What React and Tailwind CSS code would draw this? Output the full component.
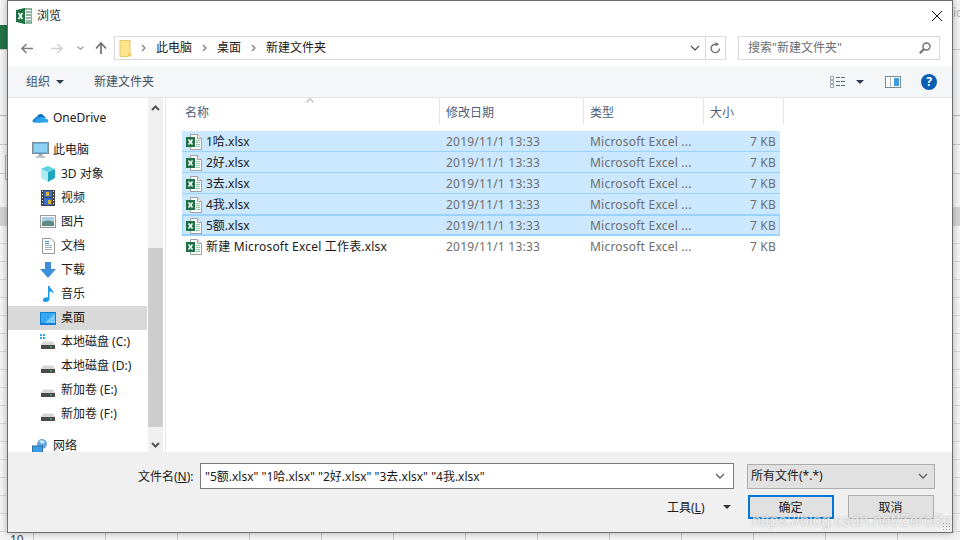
import React from 'react';

const font = "font-['Noto_Sans','Noto_Sans_CJK_SC',sans-serif]";

const XlsIcon = () => (
  <svg width="16" height="16" viewBox="0 0 16 16" className="shrink-0">
    <path d="M4.5 0.5H11.5L15.5 4.5V15.5H4.5Z" fill="#fff" stroke="#a0a0a0" />
    <path d="M11.5 0.5V4.5H15.5" fill="#f0f0f0" stroke="#a0a0a0" />
    <path d="M10 6h4v1h-4zM10 8h4v1h-4zM10 10h4v1h-4zM10 12h4v1h-4z" fill="#8fc6a4" />
    <rect x="0" y="3" width="9" height="10" fill="#1e7145" />
    <path d="M2.5 5.5L6.5 10.5M6.5 5.5L2.5 10.5" stroke="#fff" strokeWidth="1.5" />
  </svg>
);

const Drive = ({ win }) => (
  <svg width="16" height="16" viewBox="0 0 16 16" className="shrink-0">
    {win && <path d="M0 0h2v2H0zM3 0h2v2H3zM0 3h2v2H0zM3 3h2v2H3z" fill="#2ba6e8" />}
    <path d="M3 7.5h10L15 11H1Z" fill="#d6d6d6" />
    <rect x="1" y="11" width="14" height="4" fill="#4a4a4a" />
    <rect x="10" y="12.5" width="2" height="1.2" fill="#35d46a" />
  </svg>
);

const icons = {
  onedrive: (
    <svg width="17" height="16" viewBox="0 0 17 16" className="shrink-0">
      <path d="M5 6.5C6 3.5 10 3 11.5 5.5L14 8H6Z" fill="#0f6fc4" />
      <path d="M2 12.5C0 12.5 0 9 2.5 8.8C3.5 6 6.5 6 7.5 7.5L11 12.5Z" fill="#1b8ad8" />
      <path d="M4 12.5C3 10 5 8.5 7 8.3C8.5 6.5 12 6.5 13 8.8C15.5 8.5 17 10 16 12.5Z" fill="#2aa5ee" />
    </svg>
  ),
  pc: (
    <svg width="17" height="16" viewBox="0 0 17 16" className="shrink-0">
      <rect x="0.5" y="0.5" width="16" height="11" fill="#63b5e6" stroke="#7d8b96" />
      <rect x="2" y="2" width="13" height="8" fill="#8fd1f5" />
      <path d="M6.5 12h4v2h-4z" fill="#a4aab0" />
      <path d="M4 14.5h9v1H4z" fill="#7d8b96" />
    </svg>
  ),
  cube: (
    <svg width="16" height="16" viewBox="0 0 16 16" className="shrink-0">
      <path d="M8 0L1 3V12L8 16Z" fill="#a9ecf2" />
      <path d="M8 6V16L15 12V3Z" fill="#1fa6bf" />
      <path d="M1 3L8 6L15 3L8 0Z" fill="#5ed0e0" />
    </svg>
  ),
  video: (
    <svg width="14" height="16" viewBox="0 0 14 16" className="shrink-0">
      <rect width="14" height="16" fill="#444" />
      <path d="M1 1h1v1H1zM1 4h1v1H1zM1 7h1v1H1zM1 10h1v1H1zM1 13h1v1H1zM12 1h1v1h-1zM12 4h1v1h-1zM12 7h1v1h-1zM12 10h1v1h-1zM12 13h1v1h-1z" fill="#eee" />
      <rect x="3" y="1" width="8" height="6" fill="#3a6fd0" />
      <rect x="3" y="8" width="8" height="7" fill="#3a6fd0" />
      <path d="M5 2h3v4H5zM7 10h3v4H7z" fill="#d8b23a" />
    </svg>
  ),
  picture: (
    <svg width="16" height="14" viewBox="0 0 16 14" className="shrink-0">
      <rect x="0.5" y="0.5" width="15" height="12" fill="#fff" stroke="#9a9a9a" />
      <rect x="2" y="2" width="12" height="5" fill="#a9cfe6" />
      <path d="M2 7Q8 4 14 7V11H2Z" fill="#5e8a84" />
    </svg>
  ),
  doc: (
    <svg width="13" height="16" viewBox="0 0 13 16" className="shrink-0">
      <path d="M0.5 0.5H9L12.5 4V15.5H0.5Z" fill="#fff" stroke="#9a9a9a" />
      <path d="M3 3h4v1H3zM3 5h4v1H3z" fill="#3a8dd0" />
      <path d="M3 7h7v1H3zM3 9h7v1H3zM3 11h7v1H3z" fill="#9ab0c0" />
    </svg>
  ),
  download: (
    <svg width="16" height="16" viewBox="0 0 16 16" className="shrink-0">
      <path d="M5 0H11V7H16L8 16L0 7H5Z" fill="#3d8fdc" />
    </svg>
  ),
  music: (
    <svg width="13" height="16" viewBox="0 0 13 16" className="shrink-0">
      <path d="M6 0H7.5C8 3 12 4 11.5 8C10.5 6 9 5.5 7.5 5.5V13C7.5 15 5.5 16 3.5 16C1.5 16 0.5 15 1 13.5C1.5 12 4 11 6 11.5Z" fill="#1c9be6" />
    </svg>
  ),
  desktop: (
    <svg width="16" height="13" viewBox="0 0 16 13" className="shrink-0">
      <rect width="16" height="13" fill="#0f7fd0" />
      <path d="M1 1h14v10H1z" fill="#35a6f0" />
      <path d="M15 1V11H5Z" fill="#7accf8" />
    </svg>
  ),
  network: (
    <svg width="16" height="15" viewBox="0 0 16 15" className="shrink-0">
      <circle cx="10" cy="5" r="5" fill="#6aa8dc" />
      <path d="M7 2Q10 0 13 3L10 5Z" fill="#cfe6f5" />
      <rect x="0.5" y="7" width="10" height="7.5" fill="#3d9be0" stroke="#2a6ea8" />
    </svg>
  ),
};

const navItems = [
  { icon: icons.cube, label: '3D 对象' },
  { icon: icons.video, label: '视频' },
  { icon: icons.picture, label: '图片' },
  { icon: icons.doc, label: '文档' },
  { icon: icons.download, label: '下载' },
  { icon: icons.music, label: '音乐' },
  { icon: icons.desktop, label: '桌面', active: true },
  { icon: <Drive win />, label: '本地磁盘 (C:)' },
  { icon: <Drive />, label: '本地磁盘 (D:)' },
  { icon: <Drive />, label: '新加卷 (E:)' },
  { icon: <Drive />, label: '新加卷 (F:)' },
];

const files = [
  { name: '1哈.xlsx', sel: true },
  { name: '2好.xlsx', sel: true },
  { name: '3去.xlsx', sel: true },
  { name: '4我.xlsx', sel: true },
  { name: '5额.xlsx', sel: true, focus: true },
  { name: '新建 Microsoft Excel 工作表.xlsx' },
];

const Chevron = ({ color = '#606060' }) => (
  <svg width="10" height="6" viewBox="0 0 10 6"><path d="M1 1L5 5L9 1" fill="none" stroke={color} strokeWidth="1.4" /></svg>
);

const Sep = () => (
  <svg width="5" height="8" viewBox="0 0 5 8" className="mx-[10px]"><path d="M1 1L4 4L1 7" fill="none" stroke="#808080" strokeWidth="1.3" /></svg>
);

function NavRow({ icon, label, active }) {
  return (
    <div className={`h-6 w-[139px] flex items-center pl-8 text-[12px] text-[#1a1a1a] ${active ? 'bg-[#d9d9d9]' : ''}`}>
      <span className="w-4 flex justify-center mr-[5px]">{icon}</span>
      <span>{label}</span>
    </div>
  );
}

function FileRow({ name, sel, focus }) {
  return (
    <div className={`h-[21px] pt-[2px] flex items-center text-[12px] border-b ${sel ? 'border-[#99d1ff] bg-[#cce8ff]' : 'border-transparent'} ${focus ? 'shadow-[inset_0_0_0_1px_#99d1ff]' : ''}`}>
      <span className="w-[264px] flex items-center gap-1 pl-1 text-[#1a1a1a]">
        <XlsIcon />
        <span className={`whitespace-nowrap ${sel ? '' : 'tracking-[0.2px]'}`}>{name}</span>
      </span>
      <span className="w-[144px] text-[#6d6d6d] tracking-[0.22px]">2019/11/1 13:33</span>
      <span className="w-[120px] text-[#6d6d6d] tracking-[0.22px]">Microsoft Excel ...</span>
      <span className="w-[66px] text-right text-[#6d6d6d] tracking-[0.22px]">7 KB</span>
    </div>
  );
}

export default function App() {
  return (
    <div className={`relative w-[960px] h-[540px] overflow-hidden bg-[#f4f4f4] ${font}`}>
      {/* sheet behind the dialog */}
      <div className="absolute left-0 top-[225px] w-full h-[315px] bg-[linear-gradient(#d8d8d8_1px,transparent_1px)] bg-[size:100%_18px]" />
      <div className="absolute left-0 top-[525px] w-full h-[15px] bg-[linear-gradient(90deg,#c8c8c8_1px,transparent_1px)] bg-[size:72px_100%] bg-[position:33px_0]" />
      <div className="absolute left-0 top-[25px] w-2 h-[25px] bg-[#217346]" />
      <div className="absolute left-0 top-[144px] w-full h-px bg-[#c8c8c8]" />
      <div className="absolute left-[5px] top-[155px] w-[3px] h-[25px] border border-[#b0b0b0]" />
      <div className="absolute left-0 top-[207px] w-full h-[18px] bg-[#d4d4d4]" />
      <div className="absolute left-0 top-[49px] w-full h-px bg-[#c8c8c8]" />
      <div className="absolute left-0 top-[115px] w-full h-px bg-[#b8b8b8]" />
      <div className="absolute left-0 top-[173px] w-full h-px bg-[#c8c8c8]" />
      <div className="absolute left-[953px] top-[5px] text-[12px] leading-4 text-[#b0b0b0]">ic</div>
      <div className="absolute left-[10px] top-[534px] text-[12px] leading-3 text-[#444]">10</div>

      {/* dialog */}
      <div className="absolute left-[7px] top-0 w-[946px] h-[533px] bg-white border border-[#6e6e6e] shadow-[0_0_7px_rgba(0,0,0,0.3)] flex flex-col">
        {/* title */}
        <div className="h-[29px] flex items-center pl-2 pr-[10px] shrink-0">
          <svg width="16" height="16" viewBox="0 0 16 16">
            <rect x="7" y="1" width="9" height="14" fill="#fff" stroke="#1e7145" />
            <path d="M10 4h5M10 7h5M10 10h5M10 13h5" stroke="#1e7145" />
            <path d="M0 2L9 0V16L0 14Z" fill="#1e7145" />
            <path d="M2.5 5L6.5 11M6.5 5L2.5 11" stroke="#fff" strokeWidth="1.5" />
          </svg>
          <span className="ml-[5px] text-[12px] text-[#1a1a1a]">浏览</span>
          <svg width="10" height="10" viewBox="0 0 10 10" className="ml-auto">
            <path d="M0 0L10 10M10 0L0 10" stroke="#111" strokeWidth="1" />
          </svg>
        </div>

        {/* address row */}
        <div className="h-9 flex items-start pt-[6px] shrink-0">
          <div className="w-[106px] h-[24px] flex items-center pl-[13px]">
            <svg width="12" height="11" viewBox="0 0 12 11"><path d="M1 5.5H12M5.5 1L1 5.5L5.5 10" fill="none" stroke="#808080" strokeWidth="1.6" /></svg>
            <svg width="12" height="11" viewBox="0 0 12 11" className="ml-[18px]"><path d="M0 5.5H10M6 1L11 5.5L6 10" fill="none" stroke="#d0d0d0" strokeWidth="1.6" /></svg>
            <span className="ml-[14px] flex"><svg width="7" height="5" viewBox="0 0 7 5"><path d="M0.5 0.5L3.5 3.5L6.5 0.5" fill="none" stroke="#a0a0a0" strokeWidth="1.2" /></svg></span>
            <svg width="12" height="12" viewBox="0 0 12 12" className="ml-[11px]"><path d="M6 12V1.5M1 6.5L6 1L11 6.5" fill="none" stroke="#707070" strokeWidth="1.7" /></svg>
          </div>
          <div className="w-[612px] h-[24px] border border-[#d9d9d9] flex items-center text-[12px] text-[#1a1a1a]">
            <svg width="13" height="17" viewBox="0 0 13 17" className="ml-1 -mr-px">
              <path d="M1 0.5H11V13L9 16.5H1Z" fill="#fde48c" stroke="#e8c766" />
              <path d="M9 13H12.5V16.5H9Z" fill="#f2cf6b" />
            </svg>
            <Sep />
            <span>此电脑</span>
            <Sep />
            <span>桌面</span>
            <Sep />
            <span>新建文件夹</span>
            <span className="ml-auto w-[19px] flex justify-center pr-px"><Chevron /></span>
            <span className="w-5 h-full border-l border-[#d9d9d9] flex items-center justify-center">
              <svg width="11" height="12" viewBox="0 0 11 12"><path d="M9.5 6.5A4.2 4.2 0 1 1 6 2.3H8" fill="none" stroke="#707070" strokeWidth="1.4" /><path d="M5.5 0L9 2.3L5.5 4.5Z" fill="#707070" /></svg>
            </span>
          </div>
          <div className="ml-3 w-[202px] h-[24px] border border-[#d9d9d9] flex items-center pl-[9px] pr-2 text-[12px] text-[#6d6d6d]">
            <span>搜索"新建文件夹"</span>
            <svg width="12" height="12" viewBox="0 0 12 12" className="ml-auto"><circle cx="7.5" cy="4.5" r="3.5" fill="none" stroke="#707070" strokeWidth="1.4" /><path d="M5 7L0.8 11.2" stroke="#707070" strokeWidth="2" /></svg>
          </div>
        </div>

        {/* toolbar */}
        <div className="h-[31px] bg-[#f5f6f7] flex items-center pl-[18px] pr-[15px] text-[12px] text-[#3c5166] shrink-0">
          <span>组织</span>
          <span className="ml-[6px] w-0 h-0 border-x-[4px] border-x-transparent border-t-[4px] border-t-[#2b3a4d]" />
          <span className="ml-[30px]">新建文件夹</span>
          <svg width="16" height="12" viewBox="0 0 16 12" className="ml-auto">
            <path d="M0.5 0.5h3v3h-3zM0.5 4.5h3v3h-3zM0.5 8.5h3v3h-3z" fill="#fff" stroke="#9aa4b0" />
            <path d="M6 1.5h4M11 1.5h4M6 5.5h4M11 5.5h4M6 9.5h4M11 9.5h4" stroke="#5d6f82" />
          </svg>
          <span className="ml-[10px] w-0 h-0 border-x-[4px] border-x-transparent border-t-[4px] border-t-[#2b3a4d]" />
          <svg width="16" height="12" viewBox="0 0 16 12" className="ml-[21px]">
            <rect x="0.5" y="0.5" width="15" height="11" fill="#fff" stroke="#7d8b96" />
            <rect x="9" y="2" width="5" height="8" fill="#3d9be0" />
            <path d="M5.5 1V11" stroke="#b0b8c0" />
          </svg>
          <span className="ml-5 w-4 h-4 rounded-full bg-[#0a5fb4] text-white text-[12px] font-bold flex items-center justify-center">?</span>
        </div>

        {/* main */}
        <div className="flex-1 flex min-h-0 border-t border-[#e5e5e5]">
          <div className="w-[140px] overflow-hidden pt-2 shrink-0">
            <div className="h-6 mb-2 flex items-center pl-6 text-[12px] text-[#1a1a1a]">
              <span className="mr-1">{icons.onedrive}</span>OneDrive
            </div>
            <div className="h-6 flex items-center pl-6 text-[12px] text-[#1a1a1a]">
              <span className="mr-[4px]">{icons.pc}</span>此电脑
            </div>
            {navItems.map(n => <NavRow key={n.label} {...n} />)}
            <div className="h-6 mt-2 flex items-center pl-6 text-[12px] text-[#1a1a1a]">
              <span className="mr-[5px]">{icons.network}</span>网络
            </div>
          </div>

          {/* scrollbar */}
          <div className="w-[15px] bg-[#f0f0f0] flex flex-col items-center shrink-0">
            <svg width="9" height="6" viewBox="0 0 9 6" className="mt-[7px]"><path d="M1 5L4.5 1.5L8 5" fill="none" stroke="#555" strokeWidth="2" /></svg>
            <div className="w-full h-[179px] bg-[#cdcdcd] mt-[137px]" />
            <svg width="9" height="6" viewBox="0 0 9 6" className="mt-[15px]"><path d="M1 1L4.5 4.5L8 1" fill="none" stroke="#555" strokeWidth="2" /></svg>
          </div>
          <div className="w-[3px] bg-white border-r border-[#e8e8e8] shrink-0" />

          {/* list */}
          <div className="flex-1 relative pl-4">
            <svg width="8" height="5" viewBox="0 0 8 5" className="absolute left-[140px] top-0"><path d="M0.5 4.5L4 0.5L7.5 4.5" fill="none" stroke="#9a9a9a" /></svg>
            <div className="h-[27px] flex text-[12px] text-[#4c607a] -ml-4 pl-[15px]">
              <span className="w-[259px] border-r border-[#e5e5e5] pl-1 pt-[2px] flex items-center">名称</span>
              <span className="w-[144px] border-r border-[#e5e5e5] pl-[6px] pt-[2px] flex items-center">修改日期</span>
              <span className="w-[120px] border-r border-[#e5e5e5] pl-[6px] pt-[2px] flex items-center">类型</span>
              <span className="w-[80px] border-r border-[#e5e5e5] pl-[6px] pt-[2px] flex items-center">大小</span>
            </div>
            <div className="mt-[6px] w-[598px]">
              {files.map(f => <FileRow key={f.name} {...f} />)}
            </div>
          </div>
        </div>

        {/* bottom */}
        <div className="h-[80px] bg-[#f0f0f0] shrink-0 flex flex-col pt-[11px] relative">
          <div className="flex items-center h-[26px] text-[12px] text-[#1a1a1a]">
            <span className="ml-[130px] w-[62px] pt-px">文件名(<span className="underline">N</span>):</span>
            <div className="w-[534px] h-[26px] border border-[#7a7a7a] bg-white flex items-center pl-1 pr-2">
              <span className="pt-px">"5额.xlsx" "1哈.xlsx" "2好.xlsx" "3去.xlsx" "4我.xlsx"</span>
              <span className="ml-auto flex"><Chevron /></span>
            </div>
            <div className="ml-[13px] w-[188px] h-[25px] border border-[#adadad] bg-[#e1e1e1] flex items-center pl-[3px] pr-[6px]">
              <span>所有文件(*.*)</span>
              <span className="ml-auto flex"><Chevron /></span>
            </div>
          </div>
          <div className="flex items-center h-[24px] mt-[6px] text-[12px] text-[#1a1a1a]">
            <span className="ml-[659px] pt-px">工具(<span className="underline">L</span>)</span>
            <span className="ml-[18px] w-0 h-0 border-x-[4px] border-x-transparent border-t-[4px] border-t-[#333]" />
            <div className="ml-[17px] w-[86px] h-[24px] border-2 border-[#0078d7] bg-[#e1e1e1] flex items-center justify-center pt-px">确定</div>
            <div className="ml-[14px] w-[86px] h-[24px] border border-[#adadad] bg-[#e1e1e1] flex items-center justify-center pt-px">取消</div>
          </div>
          {/* resize grip */}
          <div className="absolute right-px bottom-px w-[9px] h-[9px] bg-[radial-gradient(#a8a8a8_1px,transparent_1px)] bg-[size:3px_3px]" />
        </div>
      </div>

      {/* watermark */}
      <div className="absolute left-[752px] top-[511px] font-['Liberation_Sans',sans-serif] text-[16px] leading-[20px] text-white/70 [text-shadow:0_0_2px_rgba(110,110,110,0.55)] whitespace-nowrap">https://blog.csdn.net/ZeroBz</div>
    </div>
  );
}
